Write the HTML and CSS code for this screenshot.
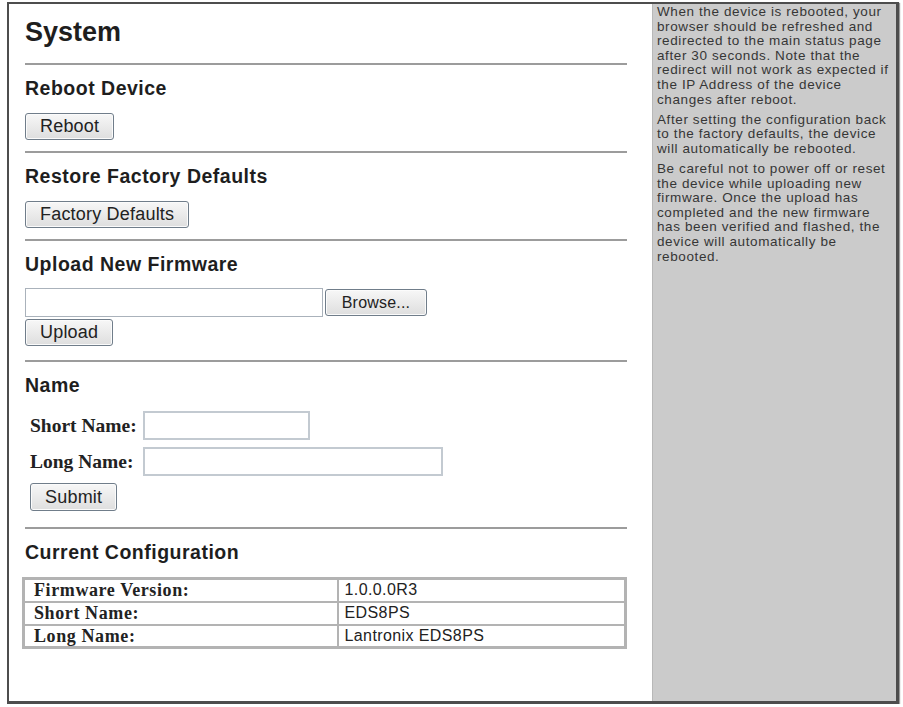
FILE: index.html
```html
<!DOCTYPE html>
<html lang="en">
<head>
    <meta charset="UTF-8">
    <meta name="viewport" content="width=device-width, initial-scale=1.0">
    <title>System</title>
    <link rel="stylesheet" href="styles.css">
</head>
<body>
    <div class="frame">
        <div class="main">
            <h1>System</h1>
            <hr>
            <h2>Reboot Device</h2>
            <button class="btn btn-reboot">Reboot</button>
            <hr>
            <h2>Restore Factory Defaults</h2>
            <button class="btn">Factory Defaults</button>
            <hr>
            <h2>Upload New Firmware</h2>
            <div class="file-row">
                <input type="text" class="file-path">
                <button class="btn btn-browse">Browse...</button>
            </div>
            <button class="btn btn-upload">Upload</button>
            <hr class="sep-after-upload">
            <h2>Name</h2>
            <div class="name-form">
                <label for="short-name">Short Name:</label>
                <input type="text" id="short-name" class="short-input">
                <label for="long-name">Long Name:</label>
                <input type="text" id="long-name" class="long-input">
            </div>
            <button class="btn btn-submit">Submit</button>
            <hr class="sep-after-name">
            <h2>Current Configuration</h2>
            <table class="config">
                <tr>
                    <th>Firmware Version:</th>
                    <td>1.0.0.0R3</td>
                </tr>
                <tr>
                    <th>Short Name:</th>
                    <td>EDS8PS</td>
                </tr>
                <tr>
                    <th>Long Name:</th>
                    <td>Lantronix EDS8PS</td>
                </tr>
            </table>
        </div>

        <div class="help">
            <p>When the device is rebooted, your browser should be refreshed and redirected to the main status page after 30 seconds. Note that the redirect will not work as expected if the IP Address of the device changes after reboot.</p>
            <p>After setting the configuration back to the factory defaults, the device will automatically be rebooted.</p>
            <p>Be careful not to power off or reset the device while uploading new firmware. Once the upload has completed and the new firmware has been verified and flashed, the device will automatically be rebooted.</p>
        </div>
    </div>
</body>
</html>
```

FILE: styles.css
```css
* {
    box-sizing: border-box;
}

body {
    margin: 0;
    background: #fff;
    font-family: 'Liberation Sans', Arial, sans-serif;
    color: #222;
}

.frame {
    display: flex;
    width: 892px;
    height: 702px;
    margin: 2px 0 0 7px;
    border: 2px solid #4d4d4d;
    border-right-width: 3px;
    border-bottom-width: 3px;
    box-shadow: 1px 1px 1px #9a9a9a;
}

.main {
    width: 643px;
    padding: 0 25px 0 16px;
    background: #fff;
}

h1 {
    margin: 12px 0 0;
    font-size: 27px;
    line-height: 32px;
    font-weight: bold;
    color: #1e1e1e;
}

h2 {
    margin: 11px 0 0;
    font-size: 19.5px;
    line-height: 24px;
    letter-spacing: 0.5px;
    font-weight: bold;
    color: #1e1e1e;
}

hr {
    margin: 11px 0 0;
    border: 0;
    border-top: 2px solid #9c9c9c;
    height: 0;
}

h1 + hr {
    margin-top: 15px;
}

hr.sep-after-upload {
    margin-top: 14px;
}

hr.sep-after-name {
    margin-top: 16px;
}

.btn {
    display: block;
    height: 27px;
    margin-top: 13px;
    padding: 0 14px;
    font-family: 'Liberation Sans', Arial, sans-serif;
    font-size: 18px;
    letter-spacing: 0.2px;
    color: #222;
    background: linear-gradient(#f7f7f7, #dedede);
    border: 1px solid #707d8a;
    border-radius: 3px;
    box-shadow: inset 0 0 0 1px #fbfbfb;
}

.file-row {
    display: flex;
    align-items: center;
    gap: 2px;
    margin-top: 12px;
}

.file-path {
    width: 298px;
    height: 29px;
    border: 1px solid #aab2bb;
    background: #fff;
}

.file-row .btn-browse {
    margin-top: 0;
    width: 102px;
    padding: 0;
    font-size: 16px;
}

.btn-upload {
    margin-top: 2px;
}

.name-form {
    display: grid;
    grid-template-columns: auto auto;
    justify-content: start;
    align-items: center;
    column-gap: 6px;
    row-gap: 7px;
    margin-top: 14px;
    padding-left: 5px;
}

.name-form label {
    font-family: 'Liberation Serif', 'Times New Roman', serif;
    font-weight: bold;
    font-size: 19.5px;
    color: #222;
}

.name-form input {
    height: 29px;
    border: 2px solid #c3cad1;
    background: #fff;
}

.short-input {
    width: 167px;
}

.long-input {
    width: 300px;
    height: 30px;
}

.btn-submit {
    margin-top: 7px;
    margin-left: 5px;
    height: 28px;
}

.config {
    width: calc(100% + 3px);
    margin: 13px 0 0 -3px;
    border-collapse: collapse;
    border: 3px solid #b3b3b3;
}

.config th,
.config td {
    height: 23px;
    padding: 0 0 0 9px;
    border: 2px solid #b3b3b3;
    text-align: left;
    line-height: 18px;
    color: #222;
}

.config th {
    width: 314px;
    font-family: 'Liberation Serif', 'Times New Roman', serif;
    font-weight: bold;
    font-size: 18px;
    letter-spacing: 0.6px;
}

.config td {
    padding-left: 6px;
    font-size: 16px;
    letter-spacing: 0.4px;
}

.help {
    width: 244px;
    padding: 1px 3px 0 4px;
    background: #cbcbcb;
    border-left: 1px solid #b8b8b8;
    font-size: 13.5px;
    line-height: 14.6px;
    letter-spacing: 0.6px;
    color: #363636;
}

.help p {
    margin: 0 0 5.5px;
}
```
